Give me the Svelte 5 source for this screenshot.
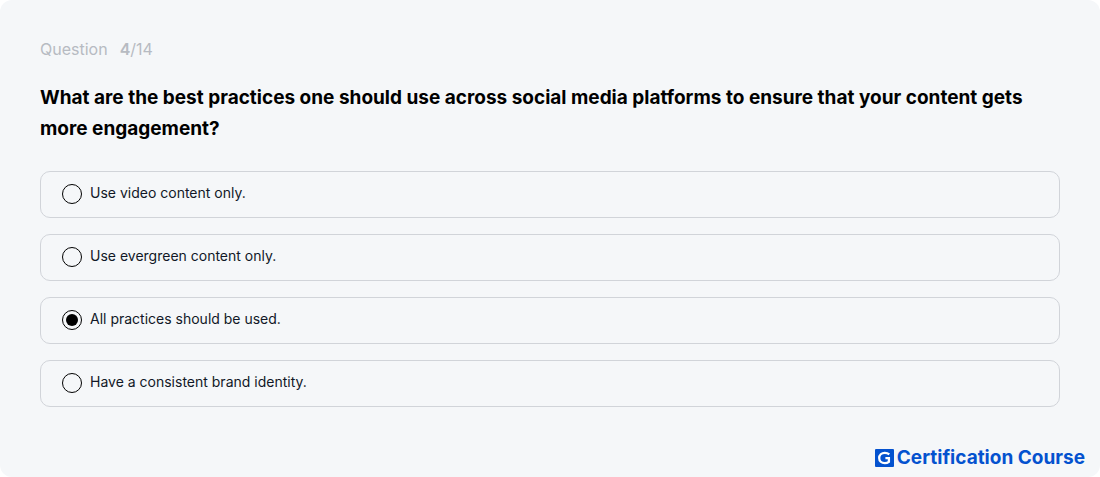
<script>
  const options = [
    'Use video content only.',
    'Use evergreen content only.',
    'All practices should be used.',
    'Have a consistent brand identity.'
  ];
  let selected = $state(2);
</script>

<main class="card">
  <p class="progress"><span>Question</span><span><b>4</b>/14</span></p>
  <h1 id="question">
    What are the best practices one should use across social media platforms to ensure that your content gets more engagement?
  </h1>
  <div class="options" role="radiogroup" aria-labelledby="question">
    {#each options as option, i}
      <label class="option">
        <input type="radio" name="answer" value={i} bind:group={selected} />
        <span>{option}</span>
      </label>
    {/each}
  </div>
  <footer class="brand">
    <svg viewBox="0 0 19 18" width="19" height="18" aria-hidden="true">
      <rect width="19" height="18" rx="1" fill="#0452cf" />
      <path d="M14.3 5.4C13 4.3 11.6 3.8 9.8 3.8C6.5 3.8 4.2 6 4.2 9S6.5 14.2 9.8 14.2C11.4 14.2 12.8 13.7 13.9 12.8V9.2H10.4" fill="none" stroke="#fff" stroke-width="2.3" />
    </svg>
    <span>Certification Course</span>
  </footer>
</main>

<style>
  :global(body) {
    margin: 0;
    background: #fff;
  }
  .card {
    box-sizing: border-box;
    padding: 37px 40px 8px;
    border-radius: 12px;
    background: #f5f7f9;
    font-family: Inter, sans-serif;
  }
  .progress {
    display: flex;
    gap: 12px;
    margin: 0;
    color: #b7bbc2;
    font-size: 16px;
    line-height: 24px;
  }
  .progress b {
    font-weight: 600;
  }
  h1 {
    margin: 21px 0 0;
    color: #000;
    font-size: 19px;
    font-weight: 700;
    line-height: 31px;
  }
  .options {
    display: grid;
    gap: 16px;
    margin-top: 27px;
  }
  .option {
    display: flex;
    align-items: center;
    gap: 8px;
    padding: 11px 21px 13px;
    border: 1px solid #d1d4d9;
    border-radius: 10px;
    color: #111827;
    font-size: 14px;
    line-height: 21px;
    cursor: pointer;
  }
  .option span {
    padding-bottom: 2px;
    line-height: 19px;
  }
  input {
    appearance: none;
    flex: none;
    box-sizing: border-box;
    width: 20px;
    height: 20px;
    margin: 1px 0 0;
    border: 1px solid #000;
    border-radius: 50%;
    cursor: pointer;
  }
  input:checked {
    padding: 3px;
    background: #000 content-box;
  }
  .brand {
    display: flex;
    justify-content: flex-end;
    align-items: center;
    gap: 3px;
    margin: 40px -25px 0 0;
    color: #0452cf;
    font-size: 19px;
    font-weight: 700;
    line-height: 22px;
  }
</style>
